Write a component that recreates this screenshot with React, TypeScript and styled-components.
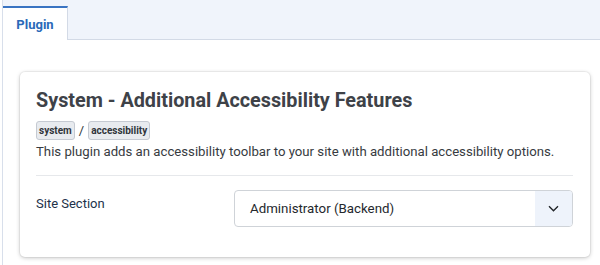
import styled, { createGlobalStyle } from "styled-components";

const GlobalStyle = createGlobalStyle`
  html, body {
    margin: 0;
    padding: 0;
    background: #ffffff;
    font-family: Roboto, "Liberation Sans", Arial, sans-serif;
  }
  * {
    box-sizing: border-box;
  }
`;

const Page = styled.div`
  width: 600px;
  height: 265px;
  padding-left: 2px;
  overflow: hidden;
`;

const TabsFrame = styled.div`
  height: 100%;
  border-left: 1px solid #d8dfeb;
  display: flex;
  flex-direction: column;
`;

const TabBar = styled.div`
  height: 40px;
  background: #f0f4fb;
  border-bottom: 1px solid #d3dae6;
  display: flex;
  align-items: flex-end;
`;

const Tab = styled.div<{ $active?: boolean }>`
  height: 34px;
  margin-bottom: -1px;
  width: 65px;
  display: flex;
  align-items: center;
  justify-content: center;
  font-size: 13px;
  font-weight: 700;
  color: #2a69b8;
  background: ${(p) => (p.$active ? "#ffffff" : "transparent")};
  border-top: 2px solid ${(p) => (p.$active ? "#3a74c2" : "transparent")};
  border-right: 1px solid #d3dae6;
`;

const TabPanel = styled.div`
  flex: 1;
  padding: 32px 10px 0 17px;
`;

const Card = styled.div`
  height: 185px;
  border-radius: 5px;
  background: #ffffff;
  box-shadow: 0 0 0 1px rgba(0, 0, 0, 0.04), 0 1px 4px rgba(0, 0, 0, 0.22);
  padding: 17px 17px 16px 16px;
`;

const Title = styled.h2`
  margin: 0;
  font-size: 19.8px;
  line-height: 24px;
  font-weight: 700;
  color: #3e4248;
`;

const TagRow = styled.div`
  margin-top: 7px;
  display: flex;
  align-items: center;
  gap: 4px;
  height: 20px;
`;

const Tag = styled.span`
  display: inline-block;
  height: 19px;
  line-height: 17px;
  padding: 0 2px;
  font-size: 10px;
  font-weight: 700;
  color: #30353b;
  background: #e8ebef;
  border: 1px solid #c5cad2;
  border-radius: 3px;
`;

const Slash = styled.span`
  font-size: 13px;
  color: #30353b;
`;

const Description = styled.p`
  margin: 1px 0 0;
  font-size: 13.2px;
  line-height: 21px;
  color: #373b41;
`;

const Divider = styled.hr`
  margin: 13px 0 0;
  border: none;
  border-top: 1px solid #e6e8eb;
`;

const FieldRow = styled.div`
  margin-top: 14px;
  display: flex;
  align-items: flex-start;
`;

const Label = styled.label`
  width: 198px;
  padding-top: 3px;
  font-size: 13px;
  line-height: 22px;
  color: #22324a;
`;

const SelectBox = styled.div`
  flex: 1;
  height: 37px;
  border: 1px solid #cfd3d8;
  border-radius: 4px;
  display: flex;
  overflow: hidden;
`;

const SelectValue = styled.div`
  flex: 1;
  padding-left: 15px;
  display: flex;
  align-items: center;
  font-size: 13.3px;
  color: #24282d;
`;

const SelectArrow = styled.div`
  width: 37px;
  background: #eef3fb;
  display: flex;
  align-items: center;
  justify-content: center;
`;

const Chevron = () => (
  <svg width="11" height="7" viewBox="0 0 11 7" fill="none">
    <path d="M1 1.2 5.5 5.7 10 1.2" stroke="#22262a" strokeWidth="1.4" />
  </svg>
);

export default function App() {
  return (
    <>
      <GlobalStyle />
      <Page>
        <TabsFrame>
          <TabBar>
            <Tab $active>Plugin</Tab>
          </TabBar>
          <TabPanel>
            <Card>
              <Title>System - Additional Accessibility Features</Title>
              <TagRow>
                <Tag>system</Tag>
                <Slash>/</Slash>
                <Tag>accessibility</Tag>
              </TagRow>
              <Description>
                This plugin adds an accessibility toolbar to your site with
                additional accessibility options.
              </Description>
              <Divider />
              <FieldRow>
                <Label>Site Section</Label>
                <SelectBox>
                  <SelectValue>Administrator (Backend)</SelectValue>
                  <SelectArrow>
                    <Chevron />
                  </SelectArrow>
                </SelectBox>
              </FieldRow>
            </Card>
          </TabPanel>
        </TabsFrame>
      </Page>
    </>
  );
}
